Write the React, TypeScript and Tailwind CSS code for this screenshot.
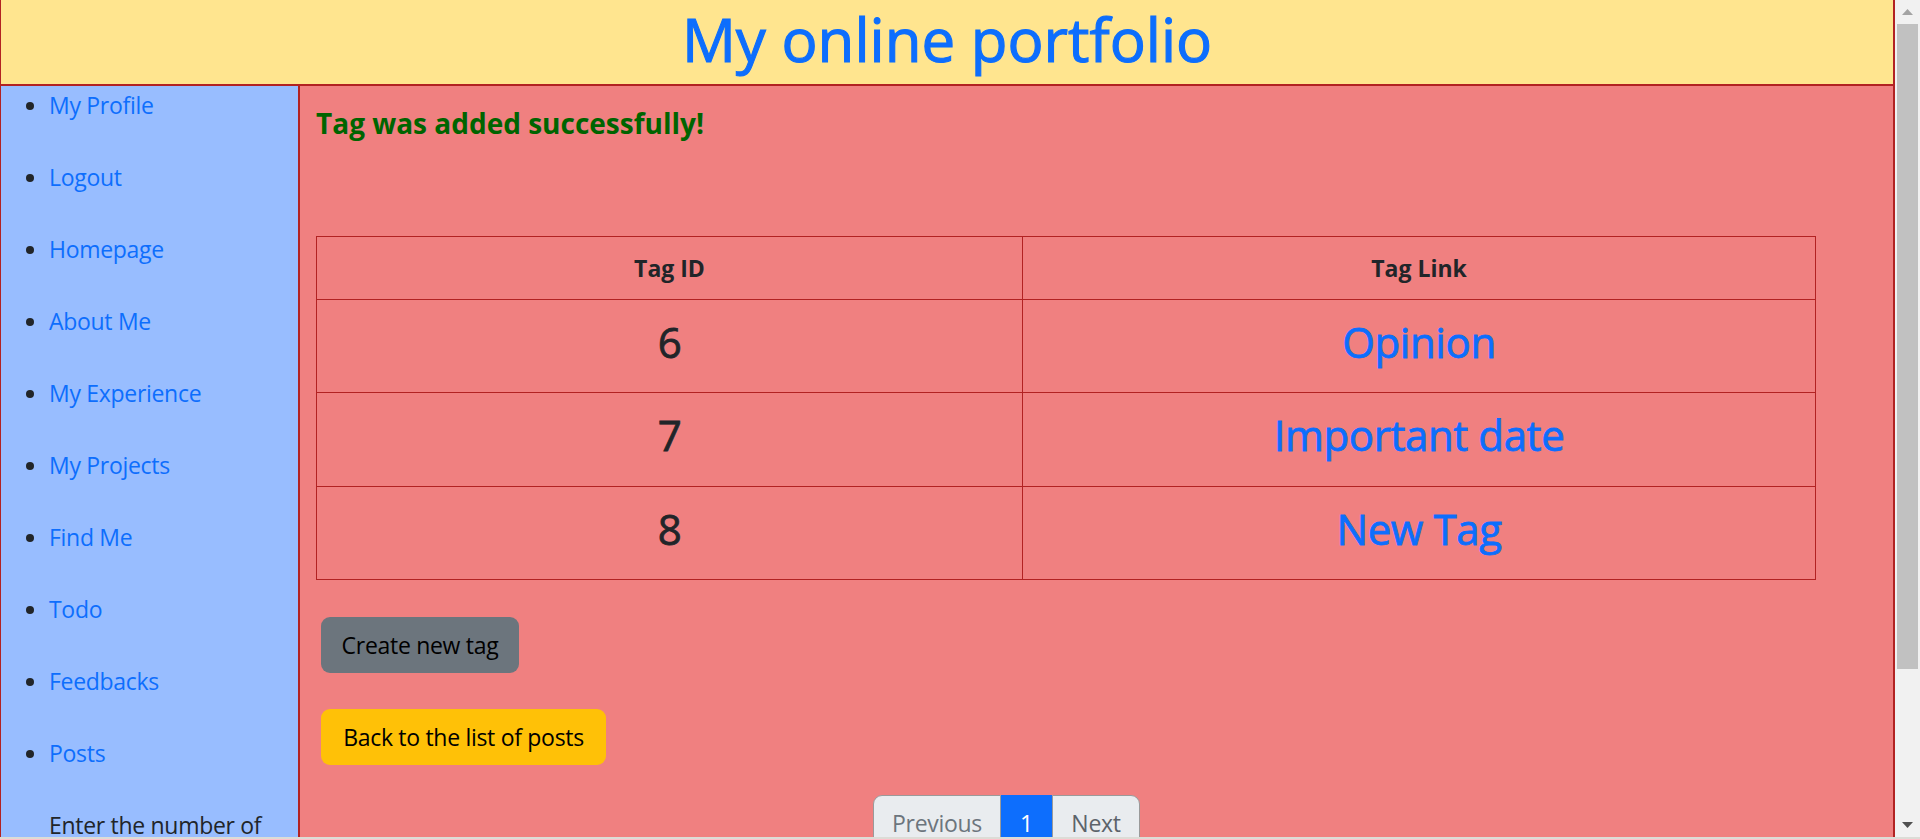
export default function App() {
  const nav = [
    "My Profile",
    "Logout",
    "Homepage",
    "About Me",
    "My Experience",
    "My Projects",
    "Find Me",
    "Todo",
    "Feedbacks",
    "Posts",
  ];
  const rows: [string, string, string][] = [
    ["6", "Opinion", "h-[93px]"],
    ["7", "Important date", "h-[94px]"],
    ["8", "New Tag", "h-[93px]"],
  ];
  return (
    <div className="flex h-[839px] w-[1920px] flex-col overflow-hidden bg-white font-['Open_Sans',sans-serif]">
      <div className="flex min-h-0 flex-1">
        <div className="flex w-[1895px] shrink-0 flex-col border-l border-r-2 border-[#b22222]">
          <header className="h-[86px] shrink-0 border-b-2 border-[#b22222] bg-[#ffe58f] text-center">
            <h1 className="pt-[3px] text-[60px] leading-[72px] text-[#0d6efd] [-webkit-text-stroke:1.1px]">
              My online portfolio
            </h1>
          </header>
          <div className="flex min-h-0 flex-1">
            <aside className="w-[299px] shrink-0 border-r-2 border-[#b22222] bg-[#98bdff] pt-[1px]">
              <ul className="list-disc pl-[48px] text-[23px] leading-[36px] tracking-[-0.3px] marker:text-[#212529]">
                {nav.map((n) => (
                  <li key={n} className="mb-[36px]">
                    <a className="text-[#0d6efd]">{n}</a>
                  </li>
                ))}
                <li className="list-none text-[#212529]">Enter the number of</li>
              </ul>
            </aside>
            <main className="min-w-0 flex-1 overflow-hidden bg-[#f08080] pl-[16px] pt-[19px]">
              <p className="text-[28px] font-bold leading-[36px] text-[#006400]">Tag was added successfully!</p>
              <table className="mt-[95px] w-[1499px] table-fixed border-collapse text-center text-[#212529]">
                <colgroup>
                  <col className="w-[706px]" />
                  <col className="w-[793px]" />
                </colgroup>
                <thead>
                  <tr className="h-[63px]">
                    <th className="border border-[#b22222] text-[23px] font-bold leading-[36px]">Tag ID</th>
                    <th className="border border-[#b22222] text-[23px] font-bold leading-[36px]">Tag Link</th>
                  </tr>
                </thead>
                <tbody>
                  {rows.map(([id, name, h]) => (
                    <tr key={id} className={h}>
                      <td className="border border-[#b22222] pb-[9px] align-middle text-[42px] leading-[50px] tracking-[-0.4px] [-webkit-text-stroke:0.8px]">
                        {id}
                      </td>
                      <td className="border border-[#b22222] pb-[9px] align-middle text-[42px] leading-[50px] tracking-[-0.4px] text-[#0d6efd] [-webkit-text-stroke:0.8px]">
                        {name}
                      </td>
                    </tr>
                  ))}
                </tbody>
              </table>
              <div className="ml-[5px] mt-[37px] flex flex-col items-start gap-[36px]">
                <button className="h-[56px] w-[198px] rounded-[9px] bg-[#6c757d] text-[23px] tracking-[-0.3px] text-black">
                  Create new tag
                </button>
                <button className="h-[56px] w-[285px] rounded-[9px] bg-[#ffc107] text-[23px] tracking-[-0.3px] text-black">
                  Back to the list of posts
                </button>
              </div>
              <nav className="ml-[557px] mt-[30px] flex h-[57px] w-fit text-[23px] tracking-[-0.3px]">
                <span className="flex w-[128px] items-center justify-center rounded-l-[9px] border border-[#9a9a9a] bg-[#e9ecef] text-[#6c757d]">
                  Previous
                </span>
                <span className="flex w-[51px] items-center justify-center bg-[#0d6efd] text-white">1</span>
                <span className="flex w-[88px] items-center justify-center rounded-r-[9px] border border-[#9a9a9a] bg-[#e9ecef] text-[#5c636a]">
                  Next
                </span>
              </nav>
            </main>
          </div>
        </div>
        <div className="flex w-[25px] shrink-0 flex-col items-center bg-[#f1f1f1]">
          <svg className="mt-[9px] shrink-0" width="11" height="6" viewBox="0 0 11 6">
            <polygon points="5.5,0 11,6 0,6" fill="#a3a3a3" />
          </svg>
          <div className="mt-[9px] h-[645px] w-[21px] shrink-0 bg-[#c1c1c1]" />
          <div className="flex-1" />
          <svg className="mb-[9px] shrink-0" width="11" height="6" viewBox="0 0 11 6">
            <polygon points="0,0 11,0 5.5,6" fill="#505050" />
          </svg>
        </div>
      </div>
      <div className="h-[2px] shrink-0 bg-[#dcdcd6]" />
    </div>
  );
}
